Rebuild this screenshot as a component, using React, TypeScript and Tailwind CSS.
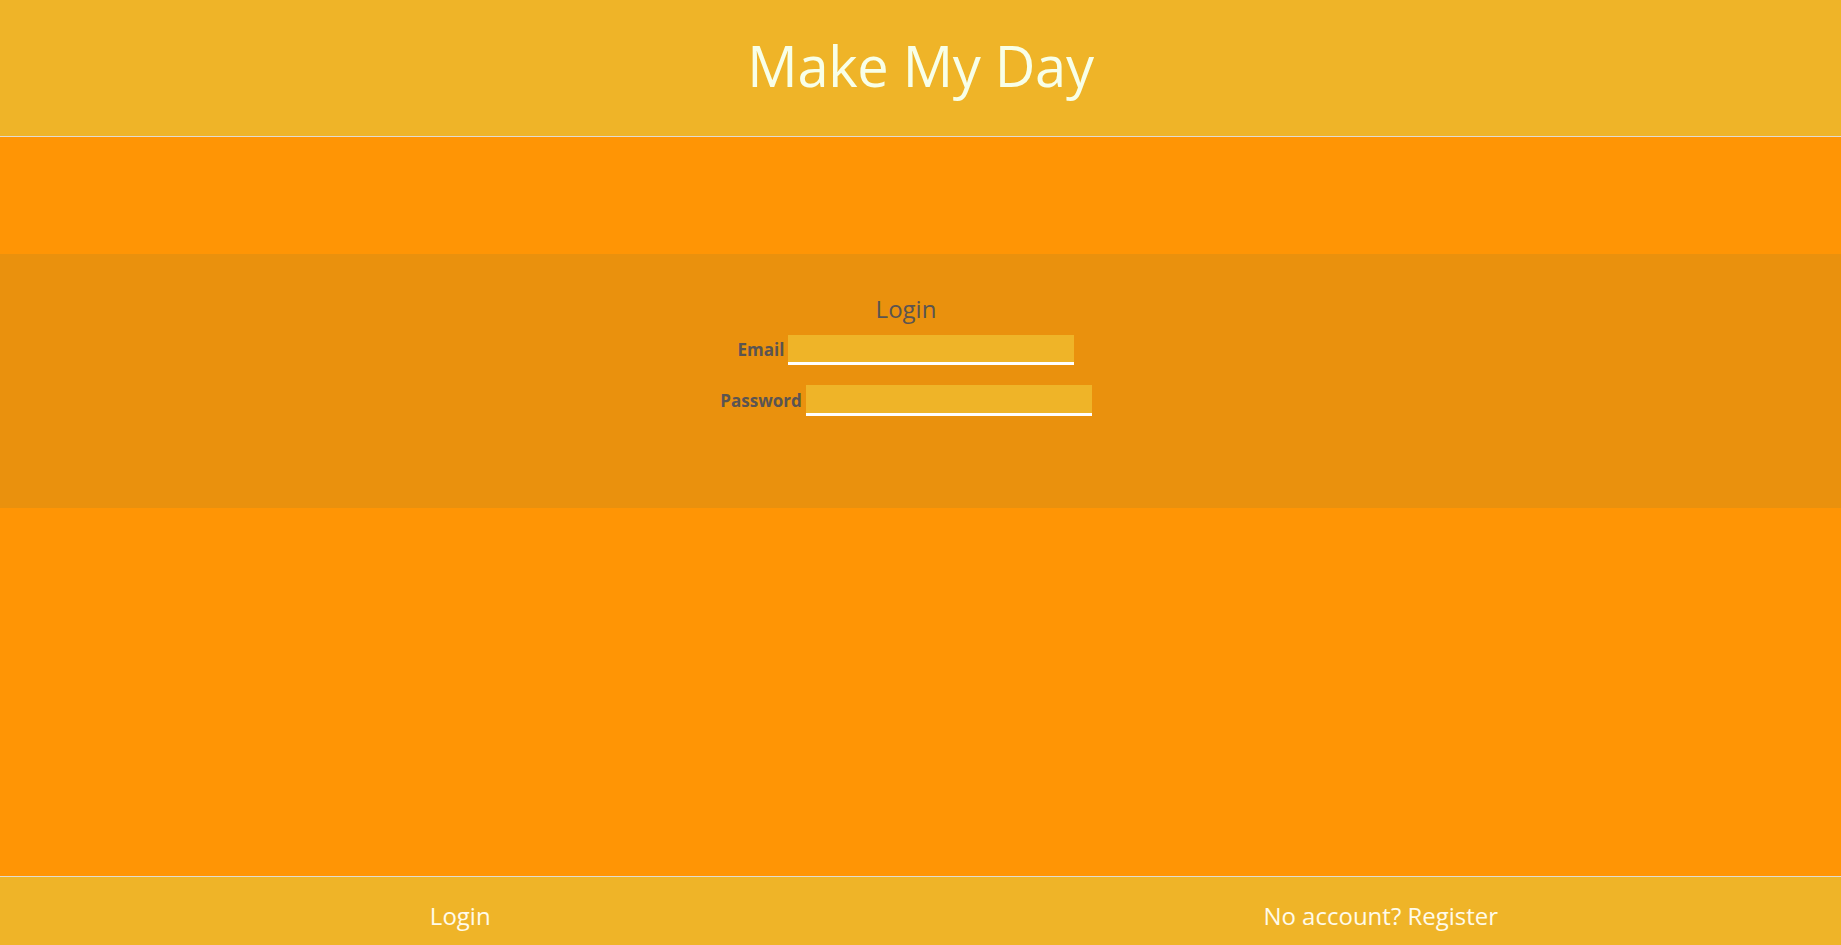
export default function App() {
  return (
    <div className="flex h-screen flex-col bg-[#ff9505] font-['Open_Sans','Noto_Sans',sans-serif]">
      {/* Header */}
      <header className="flex h-[137px] shrink-0 justify-center border-b border-[#e2dcd0] bg-[#efb428] pt-[37px]">
        <h1 className="text-[56px] leading-none font-medium tracking-[-0.3px] text-[#f8ffe8]">Make My Day</h1>
      </header>

      {/* Main */}
      <main className="flex-1 pt-[117px]">
        <section className="flex h-[254px] flex-col items-center bg-[#ea910d] pt-[43px] pr-[29px]">
          <h2 className="text-[24px] leading-none font-medium text-[#5a5452]">Login</h2>
          <form className="mt-[14px] flex flex-col items-center gap-[20px]">
            <label className="flex items-center gap-1">
              <span className="text-[17px] font-bold text-[#5a5452]">Email</span>
              <input
                type="email"
                className="h-[30px] w-[286px] border-b-[3px] border-white bg-[#efb428] outline-none"
              />
            </label>
            <label className="flex items-center gap-1">
              <span className="text-[17px] font-bold text-[#5a5452]">Password</span>
              <input
                type="password"
                className="h-[31px] w-[286px] border-b-[3px] border-white bg-[#efb428] outline-none"
              />
            </label>
          </form>
        </section>
      </main>

      {/* Footer */}
      <footer className="grid h-[69px] shrink-0 grid-cols-2 border-t border-[#e2dcd0] bg-[#efb428] pt-[27px]">
        <a className="text-center text-[24px] leading-none font-medium text-[#fffbea]">Login</a>
        <a className="text-center text-[24px] leading-none font-medium text-[#fffbea]">No account? Register</a>
      </footer>
    </div>
  );
}
